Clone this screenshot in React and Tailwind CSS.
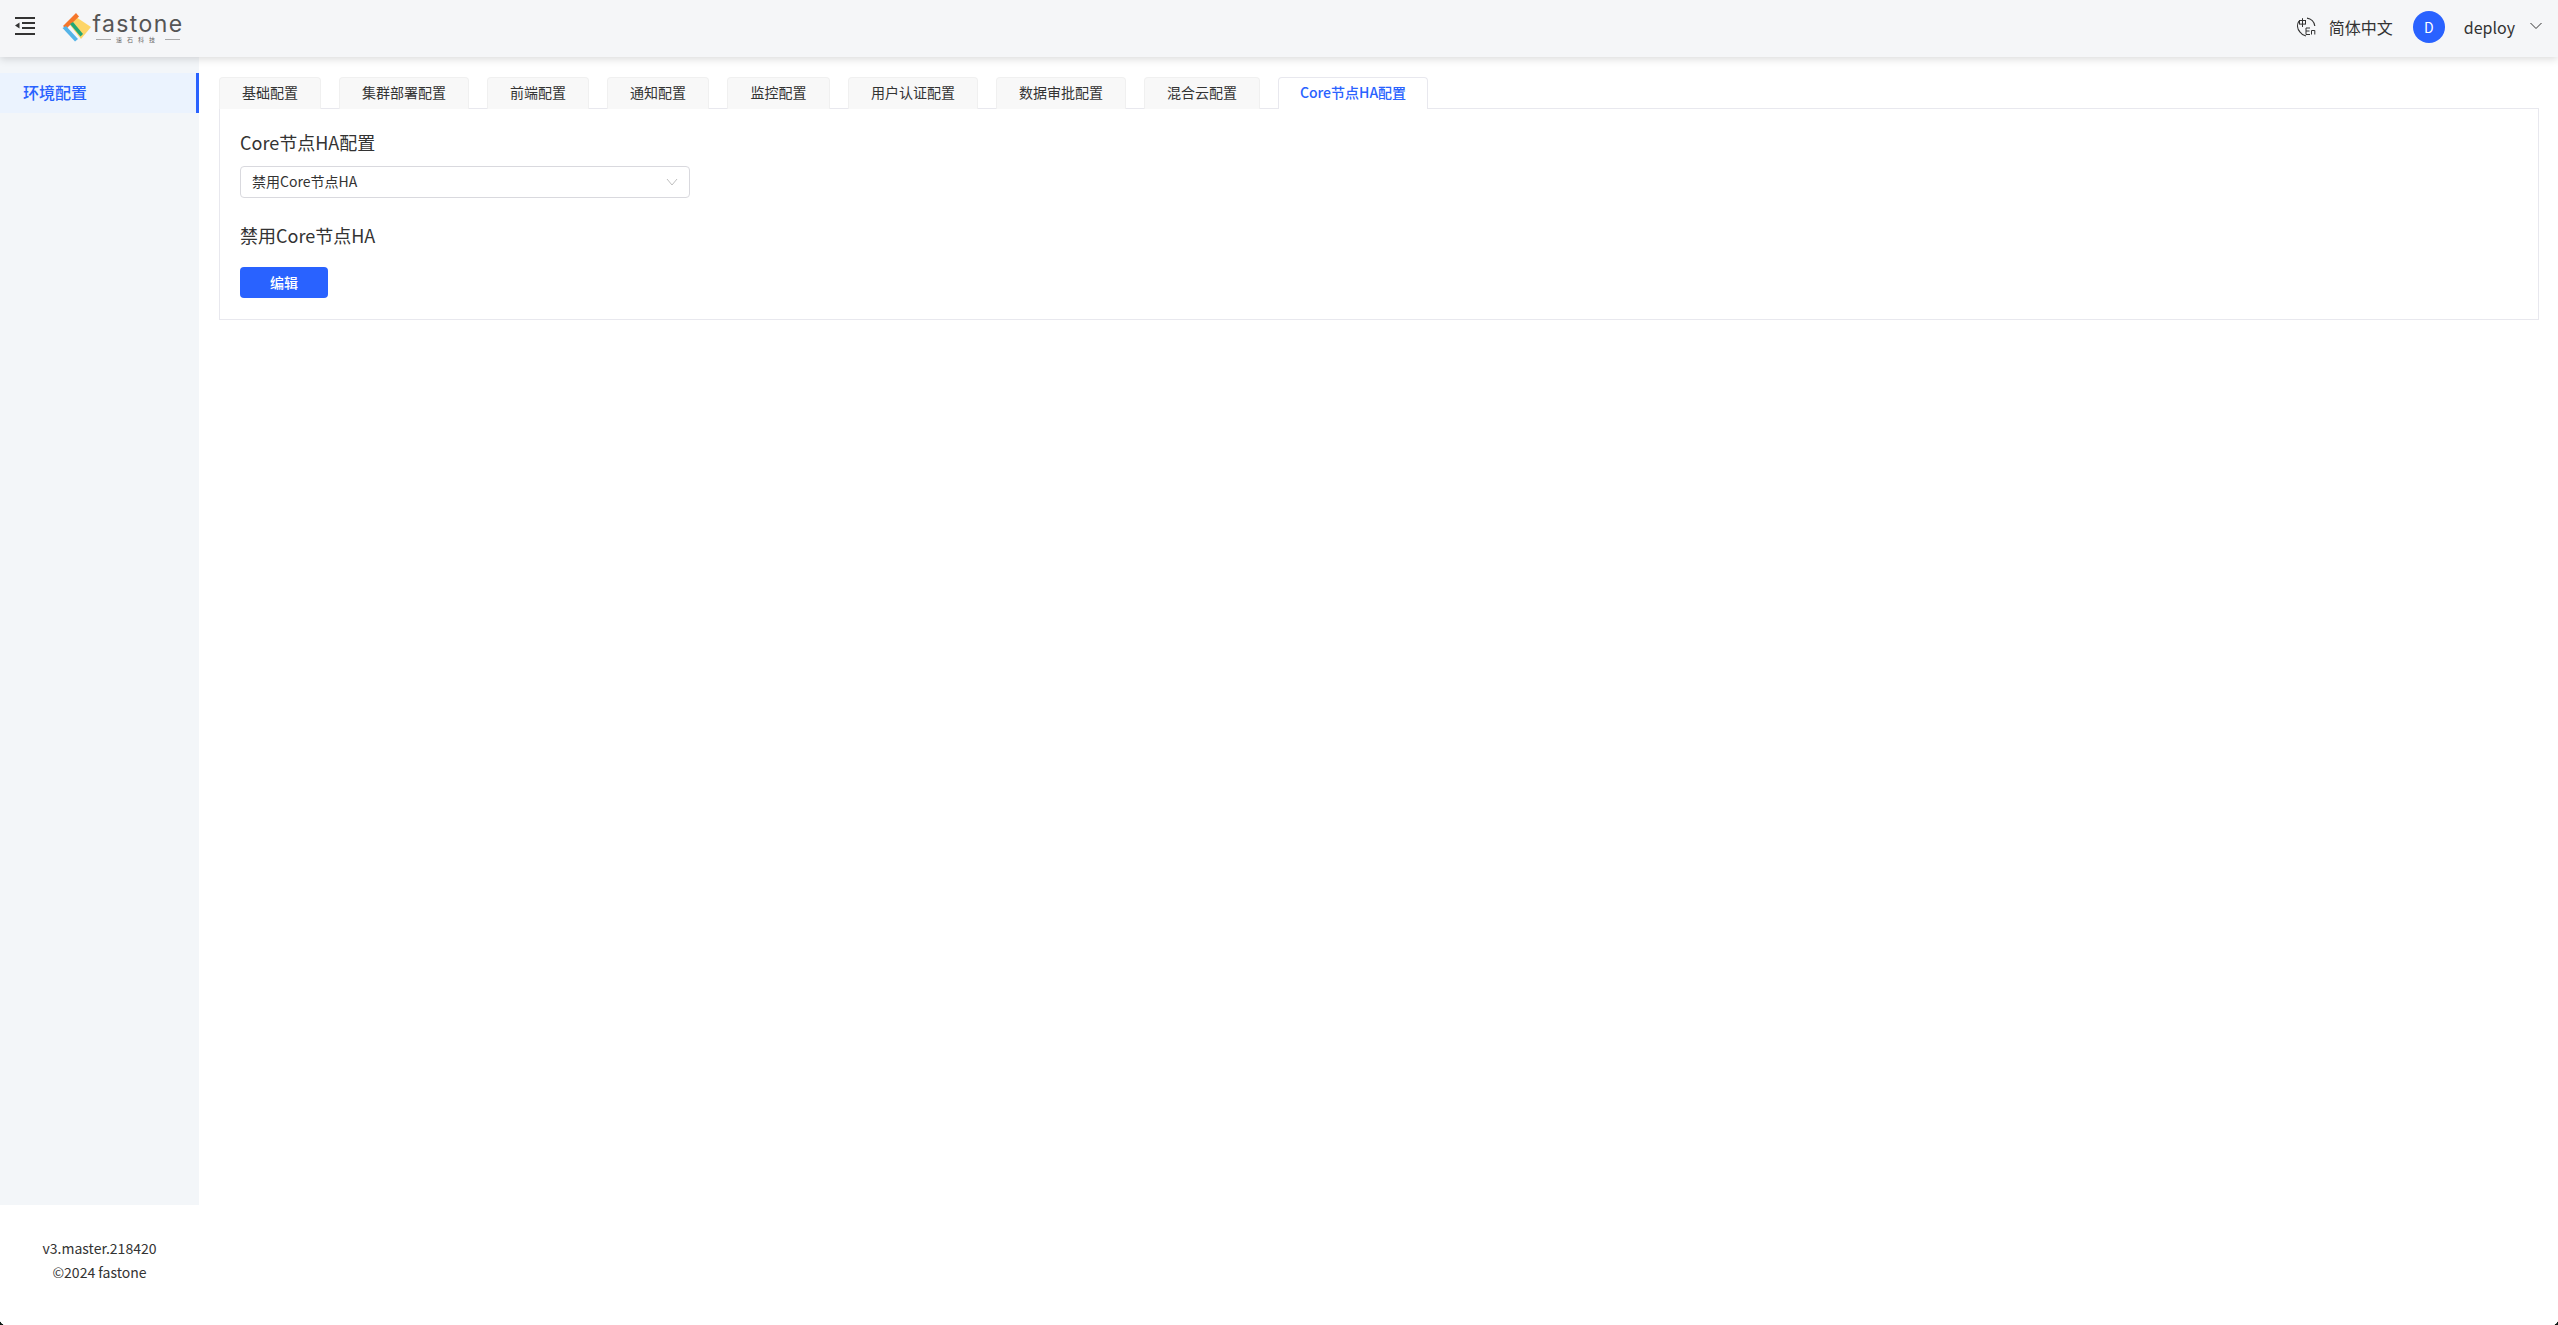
const FONT = "font-['Noto_Sans_CJK_SC','Noto_Sans',sans-serif]";

const tabs = [
  ["基础配置", "w-[102px]"],
  ["集群部署配置", "w-[130px]"],
  ["前端配置", "w-[102px]"],
  ["通知配置", "w-[102px]"],
  ["监控配置", "w-[103px]"],
  ["用户认证配置", "w-[130px]"],
  ["数据审批配置", "w-[130px]"],
  ["混合云配置", "w-[116px]"],
];

function Logo() {
  return (
    <div className="flex items-center">
      <svg width="30" height="30" viewBox="0 0 30 30" className="shrink-0">
        <path d="M14 5 L29 15 L19 27 L8 13 Z" fill="#fdd567" />
        <path d="M1 14 L14 1 L17 4.5 L4 17 Z" fill="#f5762a" />
        <path d="M0.5 16 L4 14 L16 27 L13 29.5 Z" fill="#55b4e8" />
        <path d="M8 12 L11 10 L21 22 L18.5 24.5 Z" fill="#22a676" />
      </svg>
      <div className="ml-[2px] flex w-[88px] flex-col items-center">
        <div className="mt-[2px] text-[23px] leading-[23px] tracking-[1.4px] text-[#555555] font-['Inter',sans-serif] font-normal">fastone</div>
        <div className="flex items-center gap-[5px] text-[6px] leading-[8px] text-[#666666]">
          <span className="h-px w-[15px] bg-[#aaaaaa]" />
          <span className="tracking-[5px]">速石科技</span>
          <span className="h-px w-[15px] bg-[#aaaaaa]" />
        </div>
      </div>
    </div>
  );
}

function MenuIcon() {
  return (
    <svg width="20" height="18" viewBox="0 0 20 18" fill="#333333">
      <rect x="0" y="0" width="20" height="2" />
      <rect x="7" y="5" width="13" height="2" />
      <rect x="7" y="10" width="13" height="2" />
      <rect x="0" y="16" width="20" height="2" />
      <path d="M0 8.5 L4.5 5.5 V11.5 Z" />
    </svg>
  );
}

function LangIcon() {
  return (
    <svg width="20" height="20" viewBox="0 0 20 20" fill="none" stroke="#333333" strokeWidth="1.2">
      <path d="M3 4 A9 9 0 0 0 4 15" />
      <path d="M11 1.2 A9 9 0 0 1 18.8 9" />
      <path d="M4 15 A9 9 0 0 0 10 19" />
      <rect x="3.5" y="3.5" width="6" height="3.6" strokeWidth="1" />
      <path d="M6.5 1.2 V10" strokeWidth="1" />
      <path d="M14 11 H10 V17.5 H14 M10 14 H13.5" strokeWidth="1" />
      <path d="M15.5 17.5 V13.5 H18.8 V17.5" strokeWidth="1" />
    </svg>
  );
}

export default function App() {
  return (
    <div className={`relative flex h-[1325px] w-[2558px] flex-col overflow-hidden bg-white text-[#333333] ${FONT}`}>
      <header className="relative z-10 flex h-[57px] shrink-0 items-center bg-[#f5f6f8] shadow-[0_2px_8px_rgba(0,0,0,0.15)]">
        <div className="ml-[15px] mr-[27px] flex mb-[5px]"><MenuIcon /></div>
        <div className="mb-[3px]"><Logo /></div>
        <div className="ml-auto flex items-center mb-[3px]">
          <LangIcon />
          <span className="ml-[13px] text-[16px] leading-[24px]">简体中文</span>
          <span className="ml-[20px] flex h-8 w-8 items-center justify-center rounded-full bg-[#2962ff] text-[14px] text-white">D</span>
          <span className="ml-[19px] text-[16px] leading-[24px]">deploy</span>
          <svg width="14" height="14" viewBox="0 0 14 14" fill="none" stroke="#333333" strokeWidth="1" className="ml-[14px] mr-[15px] mb-[2px]">
            <path d="M1.5 4 L7 9.5 L12.5 4" />
          </svg>
        </div>
      </header>
      <div className="flex min-h-0 flex-1">
        <aside className="flex w-[199px] shrink-0 flex-col">
          <nav className="flex-1 bg-[#f3f6f9] pt-[16px]">
            <div className="flex h-10 items-center border-r-[3px] border-[#2962ff] bg-[#ebf3fe] pb-[2px] pl-[23px] text-[16px] font-medium text-[#2962ff]">环境配置</div>
          </nav>
          <footer className="flex h-[120px] shrink-0 flex-col items-center justify-center pb-[10px] text-[14px] leading-[24px]">
            <div>v3.master.218420</div>
            <div>©2024 fastone</div>
          </footer>
        </aside>
        <main className="min-w-0 flex-1 pl-[20px] pr-[19px] pt-[20px]">
          <div className="flex h-[32px] items-stretch gap-[18px]">
            {tabs.map(([t, w]) => (
              <div key={t} className={`${w} flex items-center justify-center rounded-t-[4px] border border-b-0 border-[#f0f0f0] bg-[#f8f8f8] pb-[3px] text-[14px]`}>{t}</div>
            ))}
            <div className="relative z-10 flex h-[32px] w-[150px] items-center justify-center rounded-t-[4px] border border-b-0 border-[#e8e8ee] bg-white pb-[3px] text-[14px] font-medium text-[#2962ff]">Core节点HA配置</div>
          </div>
          <section className="-mt-px h-[212px] border border-[#e8e8ee] pl-[20px] pt-[17px]">
            <h2 className="text-[18px] leading-[32px] font-normal">Core节点HA配置</h2>
            <div className="mt-[8px] flex h-[32px] w-[450px] items-center justify-between rounded-[4px] border border-[#d9d9de] pb-[1px] pl-[11px] pr-[10px] text-[14px]">
              <span>禁用Core节点HA</span>
              <svg width="14" height="14" viewBox="0 0 14 14" fill="none" stroke="#bfbfbf" strokeWidth="1">
                <path d="M2 4 L7 10 L12 4" />
              </svg>
            </div>
            <p className="mt-[24px] text-[18px] leading-[26px]">禁用Core节点HA</p>
            <button className="mt-[19px] flex h-[31px] w-[88px] items-center justify-center rounded-[4px] bg-[#2962ff] text-[14px] font-medium text-white">编辑</button>
          </section>
        </main>
      </div>
      <div className="absolute bottom-0 left-0 h-[6px] w-[6px] bg-[radial-gradient(circle_at_100%_0,transparent_6px,#0b1a14_6.5px)]" />
      <div className="absolute bottom-0 right-0 h-[6px] w-[6px] bg-[radial-gradient(circle_at_0_0,transparent_6px,#0b1a14_6.5px)]" />
    </div>
  );
}
